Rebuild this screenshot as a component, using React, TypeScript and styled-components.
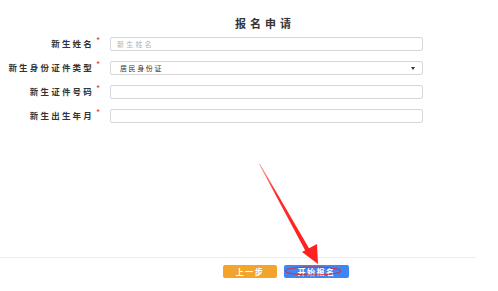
import React from "react";
import styled, { createGlobalStyle } from "styled-components";

const GlobalStyle = createGlobalStyle`
  html, body {
    margin: 0;
    padding: 0;
    background: #ffffff;
    font-family: "Noto Sans CJK SC", "Noto Sans", sans-serif;
  }
`;

const Page = styled.div`
  position: relative;
  width: 498px;
  height: 291px;
  display: flex;
  flex-direction: column;
  overflow: hidden;
`;

const Title = styled.div`
  margin-top: 15px;
  padding-left: 32px;
  height: 16px;
  line-height: 16px;
  text-align: center;
  font-size: 11px;
  font-weight: 700;
  letter-spacing: 4px;
  color: #333333;
`;

const Form = styled.div`
  margin-top: 6px;
  display: flex;
  flex-direction: column;
  gap: 10px;
`;

const Row = styled.div`
  display: flex;
  align-items: flex-start;
  height: 14px;
`;

const Label = styled.div`
  width: 94px;
  padding-top: 1px;
  text-align: right;
  font-size: 8.5px;
  font-weight: 700;
  letter-spacing: 2.2px;
  color: #333333;
  white-space: nowrap;
  line-height: 10px;
`;

const Star = styled.span`
  width: 14px;
  padding-left: 2px;
  margin-top: -1px;
  font-size: 9px;
  line-height: 10px;
  color: #e4393c;
`;

const Field = styled.div<{ $muted?: boolean; $select?: boolean }>`
  position: relative;
  box-sizing: border-box;
  width: 313px;
  height: 14px;
  border: 1px solid #d6d6d6;
  border-radius: 2px;
  padding-left: ${({ $select }) => ($select ? "9px" : "6px")};
  font-size: 7px;
  letter-spacing: ${({ $muted }) => ($muted ? "2.2px" : "1.6px")};
  line-height: 12px;
  color: ${({ $muted }) => ($muted ? "#b0b0b0" : "#333333")};
  white-space: nowrap;
`;

const Caret = styled.span`
  position: absolute;
  right: 7px;
  top: 5px;
  width: 0;
  height: 0;
  border-left: 2.5px solid transparent;
  border-right: 2.5px solid transparent;
  border-top: 3px solid #333333;
`;

const Spacer = styled.div`
  flex: 1;
`;

const Footer = styled.div`
  width: 476px;
  height: 34px;
  border-top: 1px solid #ececec;
  display: flex;
  align-items: flex-start;
  padding-top: 7px;
  padding-left: 223px;
  gap: 7px;
  box-sizing: border-box;
`;

const Button = styled.div<{ $tone: "orange" | "blue"; $w: number }>`
  width: ${({ $w }) => $w}px;
  height: 13px;
  border-radius: 2px;
  background: ${({ $tone }) => ($tone === "orange" ? "#f2a42c" : "#3d86f5")};
  color: #ffffff;
  font-size: 8px;
  font-weight: 700;
  letter-spacing: 1.5px;
  line-height: 13px;
  text-align: center;
  white-space: nowrap;
`;

const Annotation = styled.svg`
  position: absolute;
  left: 0;
  top: 0;
  pointer-events: none;
`;

const fields = [
  { label: "新生姓名", value: "新生姓名", muted: true },
  { label: "新生身份证件类型", value: "居民身份证", select: true },
  { label: "新生证件号码", value: "" },
  { label: "新生出生年月", value: "" },
];

export default function App() {
  return (
    <Page>
      <GlobalStyle />
      <Title>报名申请</Title>
      <Form>
        {fields.map((f) => (
          <Row key={f.label}>
            <Label>{f.label}</Label>
            <Star>*</Star>
            <Field $muted={f.muted} $select={f.select}>
              {f.value}
              {f.select && <Caret />}
            </Field>
          </Row>
        ))}
      </Form>
      <Spacer />
      <Footer>
        <Button $tone="orange" $w={54}>上一步</Button>
        <Button $tone="blue" $w={65}>开始报名</Button>
      </Footer>
      <Annotation width="498" height="291" viewBox="0 0 498 291">
        <defs>
          <linearGradient id="arrowFade" x1="259" y1="164" x2="318" y2="262" gradientUnits="userSpaceOnUse">
            <stop offset="0" stopColor="#ff3b3b" stopOpacity="0.5" />
            <stop offset="0.3" stopColor="#ff2a2a" />
            <stop offset="1" stopColor="#ff2020" />
          </linearGradient>
        </defs>
        <polygon points="259,164 260,164 310,250 306,252" fill="url(#arrowFade)" />
        <polygon points="302,252 317,244 318,264" fill="#ff2020" />
        <ellipse cx="313" cy="271" rx="28" ry="4" fill="none" stroke="#e8262a" strokeWidth="1" />
      </Annotation>
    </Page>
  );
}
